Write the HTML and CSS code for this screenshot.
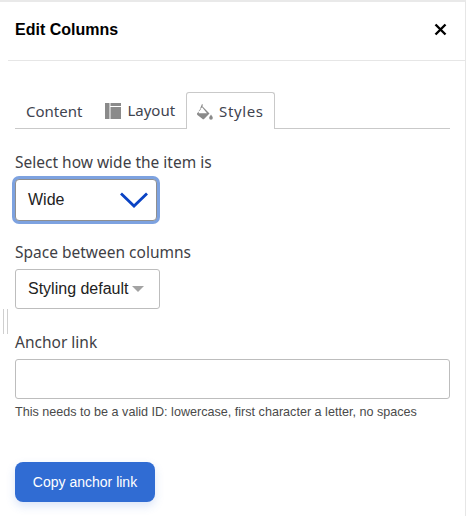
FILE: index.html
```html
<!DOCTYPE html>
<html lang="en">
<head>
<meta charset="utf-8">
<title>Edit Columns</title>
<link rel="stylesheet" href="styles.css">
</head>
<body>
<div class="panel">
  <header class="head">
    <h1 class="title">Edit Columns</h1>
    <svg class="close" width="13" height="13" viewBox="0 0 13 13" aria-hidden="true"><path d="M1.500 1.500l10 10M11.500 1.500l-10 10"/></svg>
  </header>
  <div class="body">
    <nav class="tabs">
      <span class="tab">Content</span>
      <span class="tab tab-icon">
        <svg width="16" height="16" viewBox="0 0 16 16" aria-hidden="true"><path fill="#8a8a8a" d="M0 0h4.500v16H0zM5.500 0H16v3H5.500zM5.500 4H16v12H5.500z"/></svg>
        Layout
      </span>
      <span class="tab tab-icon active">
        <svg width="16" height="16" viewBox="0 0 16 16" aria-hidden="true"><path fill="#8a8a8a" fill-rule="evenodd" d="M5 0l1.100 1.100-1 1 7.400 7.400-5.200 5.300a1.400 1.400 0 0 1-2 0L0.400 10.900a1.400 1.400 0 0 1 0-2L4 5.300l-.900-.9zM5.100 3.300L1.900 6.500l-.2 2.700h8.300z"/><path fill="#8a8a8a" d="M14 10.500c.8 1.200 1.800 2.300 1.800 3.400a1.800 1.800 0 0 1-3.600 0c0-1.100 1-2.200 1.800-3.400z"/></svg>
        <span class="wide-text">Styles</span>
      </span>
    </nav>
    <label class="label first">Select how wide the item is</label>
    <div class="select focused">
      <span>Wide</span>
      <svg width="28" height="16" viewBox="0 0 28 16" aria-hidden="true"><path d="M1 1.500L14 14 27 1.500" fill="none" stroke="#0a43c4" stroke-width="2.800"/></svg>
    </div>
    <label class="label second">Space between columns</label>
    <div class="select plain">
      <span>Styling default</span>
      <i class="caret"></i>
    </div>
    <label class="label third">Anchor link</label>
    <input class="input" type="text" aria-label="Anchor link">
    <p class="hint">This needs to be a valid ID: lowercase, first character a letter, no spaces</p>
    <button class="copy" type="button">Copy anchor link</button>
  </div>
  <div class="grip"></div>
</div>
</body>
</html>
```
FILE: styles.css
```css
* { box-sizing: border-box; }
html, body { margin: 0; padding: 0; background: #fff; }
body { width: 468px; height: 516px; overflow: hidden; font-family: "Liberation Sans", Arial, sans-serif; }
.panel {
  position: relative;
  width: 466px;
  height: 516px;
  background: #fff;
  border-top: 2px solid #e9e9e9;
  border-right: 1px solid #e6e6e6;
}
.head {
  display: flex;
  align-items: center;
  justify-content: space-between;
  height: 59px;
  margin-left: 8px;
  padding: 0 18px 3px 7px;
  border-bottom: 1px solid #e6e6e6;
}
.title { margin: 0; font-size: 16px; line-height: 20px; font-weight: 700; color: #000; }
.close path { fill: none; stroke: #000; stroke-width: 2.400; }
.body { padding: 31px 15px 0; }
.tabs { display: flex; align-items: flex-end; height: 37px; border-bottom: 1px solid #c9c9c9; }
.tab {
  display: flex;
  align-items: center;
  gap: 6px;
  height: 36px;
  padding: 1px 11px 0;
  font: 15px/20px "Noto Sans", sans-serif;
  color: #3f4450;
}
.tab-icon { padding: 0 11px 1px 12px; }
.tab-icon svg { flex: none; margin-top: 2px; }
.active {
  height: 37px;
  margin-bottom: -1px;
  background: #fff;
  border: 1px solid #c9c9c9;
  border-bottom: 0;
  border-radius: 3px 3px 0 0;
  padding-left: 10px;
  padding-right: 10px;
}
.wide-text { letter-spacing: .6px; }
.label { display: block; font: 15.500px/20px "Noto Sans", sans-serif; color: #3f3f46; }
.first { margin-top: 23px; }
.second { margin-top: 21px; }
.third { margin-top: 23px; }
.select {
  display: flex;
  align-items: center;
  background: #fff;
  font-size: 16px;
  color: #222;
  border: 1px solid #bdbdbd;
  border-radius: 3px;
}
.focused {
  justify-content: space-between;
  width: 142px;
  height: 42px;
  margin: 7px 0 0;
  padding: 0 8px 0 12px;
  border-color: #8f8f8f;
  box-shadow: 0 0 0 3px #7da2e0;
  border-radius: 4px;
}
.plain {
  gap: 3px;
  width: 145px;
  height: 40px;
  margin-top: 7px;
  padding: 0 0 0 12px;
}
.caret { width: 0; height: 0; border: 6px solid transparent; border-top: 6px solid #a3a3a3; border-bottom: 0; }
.input {
  display: block;
  width: 435px;
  height: 40px;
  margin-top: 7px;
  border: 1px solid #bdbdbd;
  border-radius: 3px;
  background: #fff;
}
.hint { margin: 5px 0 0; font-size: 12.600px; line-height: 16px; color: #4a4a4a; }
.copy {
  display: block;
  width: 140px;
  height: 40px;
  margin-top: 42px;
  border: 0;
  border-radius: 8px;
  background: #306cd3;
  color: #fff;
  font: 14px "Liberation Sans", Arial, sans-serif;
  box-shadow: 0 4px 10px rgba(48, 108, 211, .18);
}
.grip { position: absolute; left: 3px; top: 307px; width: 5px; height: 25px; border-left: 1px solid #cfcfcf; border-right: 1px solid #cfcfcf; }
```
